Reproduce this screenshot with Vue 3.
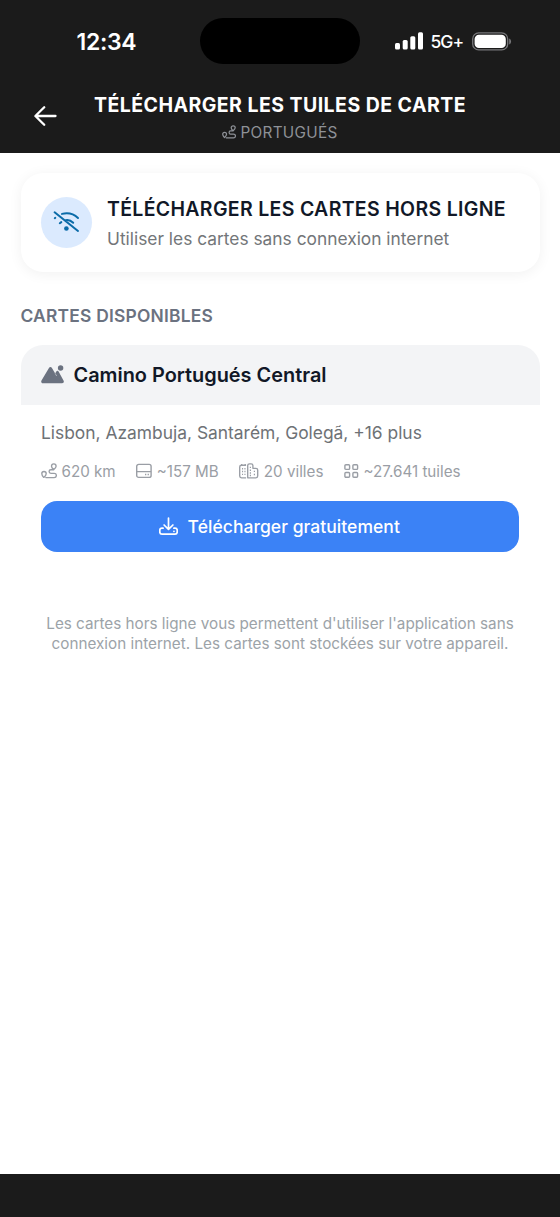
<script setup>
const places = 'Lisbon, Azambuja, Santarém, Golegã, +16 plus'
</script>

<template>
  <div class="screen">
    <header class="top">
      <div class="status">
        <span class="time">12:34</span>
        <div class="island"></div>
        <div class="signals">
          <svg class="bars" width="28" height="18" viewBox="0 0 28 18" fill="#fff">
            <rect x="0" y="11" width="5" height="6.6" rx="1.5" />
            <rect x="7.7" y="8" width="5" height="9.6" rx="1.5" />
            <rect x="15.3" y="4.2" width="5" height="13.4" rx="1.5" />
            <rect x="23" y="0.2" width="5" height="17.4" rx="1.5" />
          </svg>
          <span class="network">5G+</span>
          <svg class="battery" width="40" height="19" viewBox="0 0 40 19">
            <rect x="0.7" y="0.9" width="35" height="17" rx="6" fill="none" stroke="#77777a" stroke-width="1.3" />
            <rect x="2.6" y="2.8" width="31.2" height="13.2" rx="4.3" fill="#fff" />
            <path d="M37.2 6.4c2.5 1.3 2.5 4.7 0 6z" fill="#77777a" />
          </svg>
        </div>
      </div>
      <div class="nav">
        <svg class="back" width="24" height="22" viewBox="0 0 24 22" fill="none" stroke="#fff" stroke-width="2.3" stroke-linecap="round" stroke-linejoin="round">
          <path d="M21.5 11H1.7M10.2 2.2 1.4 11l8.8 8.8" />
        </svg>
        <div class="heading">
          <h1>TÉLÉCHARGER LES TUILES DE CARTE</h1>
          <div class="route">
            <svg width="14" height="14" viewBox="0 0 16 16" fill="none" stroke="currentColor" stroke-width="1.4" stroke-linejoin="round" stroke-linecap="round">
              <path d="M2.8 14.4C1.6 13.2.8 12 .8 10.7a2.2 2.2 0 0 1 4.4 0c0 1.3-1 2.5-2.4 3.7zM12.8 6.6c-1.6-1.3-2.3-2.2-2.3-3.4a2.3 2.3 0 0 1 4.6 0c0 1.2-.8 2.1-2.3 3.4zM12.7 6.7H9.9a1.8 1.8 0 0 0 0 3.6h3.3a2 2 0 0 1 0 4.3H4.8" />
            </svg>
            <span>PORTUGUÉS</span>
          </div>
        </div>
      </div>
    </header>

    <main class="content">
      <section class="intro">
        <div class="disc">
          <svg width="28" height="24" viewBox="0 0 28 24" fill="none" stroke="#0a6ba8" stroke-width="2" stroke-linecap="round">
            <path d="M2.6 2.3 26 21M10 3.9c5.2-1.3 11.2-.5 16 4.1M13.6 10.2c2.8-.7 5.3.3 7.6 2.6M2.8 8.2l.5-.4M7.8 13.2l1.5-1.1" />
            <circle cx="14.4" cy="18.5" r="2.3" fill="#0a6ba8" stroke="none" />
          </svg>
        </div>
        <div class="intro-text">
          <h2>TÉLÉCHARGER LES CARTES HORS LIGNE</h2>
          <p>Utiliser les cartes sans connexion internet</p>
        </div>
      </section>

      <h3 class="section-title">CARTES DISPONIBLES</h3>

      <section class="map">
        <div class="map-head">
          <svg width="23" height="19" viewBox="0 0 23 19" fill="#6b7280">
            <path d="M.5 15.6 7.8 3.2c.9-1.5 2.4-1.5 3.3 0l3.1 5.2 1.1-1.8c.7-1.1 1.7-1.1 2.3 0l4.9 9c.8 1.4.1 2.6-1.4 2.6H1.9C.4 18.2-.2 17 .5 15.6z" />
            <circle cx="19.6" cy="3" r="2.7" />
            <path d="m14.1 8.4 1.6 2.6" fill="none" stroke="#f3f4f6" stroke-width=".5" />
          </svg>
          <h4>Camino Portugués Central</h4>
        </div>
        <div class="map-body">
          <p class="places">{{ places }}</p>
          <div class="stats">
            <div class="stat km">
              <svg width="16" height="16" viewBox="0 0 16 16" fill="none" stroke="currentColor" stroke-width="1.35" stroke-linejoin="round" stroke-linecap="round">
                <path d="M2.8 14.4C1.6 13.2.8 12 .8 10.7a2.2 2.2 0 0 1 4.4 0c0 1.3-1 2.5-2.4 3.7zM12.8 6.6c-1.6-1.3-2.3-2.2-2.3-3.4a2.3 2.3 0 0 1 4.6 0c0 1.2-.8 2.1-2.3 3.4zM12.7 6.7H9.9a1.8 1.8 0 0 0 0 3.6h3.3a2 2 0 0 1 0 4.3H4.8" />
              </svg>
              <span>620 km</span>
            </div>
            <div class="stat mb">
              <svg width="16" height="16" viewBox="0 0 16 16" fill="none" stroke="currentColor" stroke-width="1.4">
                <rect x=".7" y="1.4" width="14.4" height="13" rx="2" />
                <path d="M.7 8.6h14.4M9 11.5h1.3M11.6 11.5h1.3" />
              </svg>
              <span>~157 MB</span>
            </div>
            <div class="stat towns">
              <svg width="20" height="16" viewBox="0 0 20 16" fill="none" stroke="currentColor" stroke-width="1.35" stroke-linejoin="round">
                <path d="M7.1 14.8H2.5c-1.2 0-1.8-.6-1.8-1.8V4c0-1.2.6-1.8 1.8-1.8h4.6M2.7 2V.9M6.2 2V.9M8.7 14.8V2.6c0-1.2.6-1.8 1.8-1.8h1.6c1.2 0 1.8.6 1.8 1.8v2.7h3c1.2 0 1.8.6 1.8 1.8V13c0 1.2-.6 1.8-1.8 1.8z" />
                <path d="M3 5.7h1.1M5.4 5.7h1.1M3 8.5h1.1M5.4 8.5h1.1M3 11.3h1.1M5.4 11.3h1.1M10.8 4.4H12M10.8 7.2H12M10.8 10H12M10.8 12.5H12M14.8 8.3H16M14.8 11.5H16" />
              </svg>
              <span>20 villes</span>
            </div>
            <div class="stat tiles">
              <svg width="15" height="16" viewBox="0 0 15 16" fill="none" stroke="currentColor" stroke-width="1.4">
                <rect x=".9" y="1.7" width="4.7" height="4.7" rx="1" />
                <rect x="8.9" y="1.7" width="4.7" height="4.7" rx="1" />
                <rect x=".9" y="9.5" width="4.7" height="4.7" rx="1" />
                <rect x="8.9" y="9.5" width="4.7" height="4.7" rx="1" />
              </svg>
              <span>~27.641 tuiles</span>
            </div>
          </div>
          <button class="download">
            <svg width="19" height="19" viewBox="0 0 19 19" fill="none" stroke="#fff" stroke-width="1.7" stroke-linecap="round" stroke-linejoin="round">
              <path d="M9.5 1v11.2M5.1 8l4.4 4.4L13.9 8M4.1 11.2H3c-1.5 0-2.2.7-2.2 2.1v1.8c0 1.4.7 2.1 2.2 2.1h13c1.5 0 2.2-.7 2.2-2.1v-1.8c0-1.4-.7-2.1-2.2-2.1h-1.1M14.9 14.3h.1" />
            </svg>
            <span>Télécharger gratuitement</span>
          </button>
        </div>
      </section>

      <p class="note">
        <span>Les cartes hors ligne vous permettent d'utiliser l'application sans</span>
        <span>connexion internet. Les cartes sont stockées sur votre appareil.</span>
      </p>
    </main>
    <footer class="bottom"></footer>
  </div>
</template>

<style>
body {
  margin: 0;
  background: #fff;
}
</style>

<style scoped>
.screen {
  width: 560px;
  height: 1217px;
  display: flex;
  flex-direction: column;
  overflow: hidden;
  background: #fff;
  font-family: Inter, "Liberation Sans", sans-serif;
}
h1, h2, h3, h4, p {
  margin: 0;
  white-space: nowrap;
}
svg {
  flex: none;
  display: block;
}
.top {
  height: 152.6px;
  flex: none;
  background: #1b1b1b;
  color: #fff;
}
.status {
  height: 82px;
  display: grid;
  grid-template-columns: 200px 160px 200px;
  align-items: center;
}
.time {
  padding: 1px 0 0 76.5px;
  font-size: 23px;
  font-weight: 600;
  letter-spacing: -0.3px;
}
.island {
  height: 46.5px;
  border-radius: 24px;
  background: #000;
}
.signals {
  display: flex;
  align-items: center;
  padding-left: 35px;
}
.network {
  width: 33px;
  margin: 1px 8.5px 0 7.5px;
  font-size: 17.5px;
  font-weight: 500;
  letter-spacing: -1px;
  white-space: nowrap;
}
.nav {
  height: 70px;
  display: grid;
  grid-template-columns: 60px 440px 60px;
}
.back {
  margin: 23px 0 0 34px;
}
.heading {
  text-align: center;
}
h1 {
  margin-top: 11px;
  font-size: 19.5px;
  line-height: 24px;
  font-weight: 700;
  letter-spacing: 0.45px;
}
.route {
  display: flex;
  justify-content: center;
  align-items: center;
  gap: 4px;
  margin-top: 5px;
  height: 20px;
  font-size: 15.3px;
  letter-spacing: 0.3px;
  color: #8e9197;
}
.content {
  flex: 1;
  padding: 20.4px 20.5px 0;
}
.intro {
  height: 99px;
  box-sizing: border-box;
  padding: 0 20.5px;
  display: flex;
  align-items: center;
  gap: 15px;
  border-radius: 22px;
  background: #fff;
  box-shadow: 0 2px 14px rgba(0, 0, 0, 0.06);
}
.disc {
  width: 51px;
  height: 51px;
  flex: none;
  border-radius: 50%;
  background: #dbeafe;
  display: flex;
  align-items: center;
  justify-content: center;
}
.disc svg {
  margin-right: 1.5px;
}
h2 {
  margin-top: 2px;
  font-size: 19.5px;
  line-height: 28px;
  font-weight: 600;
  letter-spacing: 0.32px;
  color: #111827;
}
.intro-text p {
  margin-top: 4px;
  font-size: 17.35px;
  line-height: 24px;
  color: #737679;
}
.section-title {
  margin-top: 32.5px;
  font-size: 17.4px;
  line-height: 24px;
  font-weight: 600;
  letter-spacing: 0.23px;
  color: #6b7280;
}
.map {
  margin-top: 16.5px;
}
.map-head {
  height: 60px;
  padding-left: 20px;
  display: flex;
  align-items: center;
  gap: 10px;
  border-radius: 22px 22px 0 0;
  background: #f3f4f6;
}
h4 {
  font-size: 19.9px;
  font-weight: 600;
  color: #111827;
}
.map-body {
  padding: 15.5px 20.5px 0;
}
.places {
  font-size: 17.4px;
  line-height: 25px;
  color: #6e7276;
}
.stats {
  margin-top: 16px;
  height: 20px;
  display: flex;
  gap: 20.6px;
}
.stat {
  display: flex;
  align-items: center;
  gap: 4.5px;
  font-size: 15.2px;
  white-space: nowrap;
  color: #9a9ea5;
}
.download {
  margin-top: 20px;
  width: 100%;
  height: 50.5px;
  padding: 0 1.5px 0 0;
  border: 0;
  border-radius: 16px;
  background: #3b82f6;
  color: #fff;
  display: flex;
  align-items: center;
  justify-content: center;
  gap: 10px;
  font-family: inherit;
  font-size: 17.5px;
  font-weight: 500;
  letter-spacing: 0.04px;
}
.note {
  margin-top: 61.8px;
  font-size: 15.25px;
  line-height: 20.7px;
  text-align: center;
  color: #9ca3a8;
}
.note span {
  display: block;
}
.bottom {
  height: 43.4px;
  flex: none;
  background: #1b1b1b;
}
</style>
